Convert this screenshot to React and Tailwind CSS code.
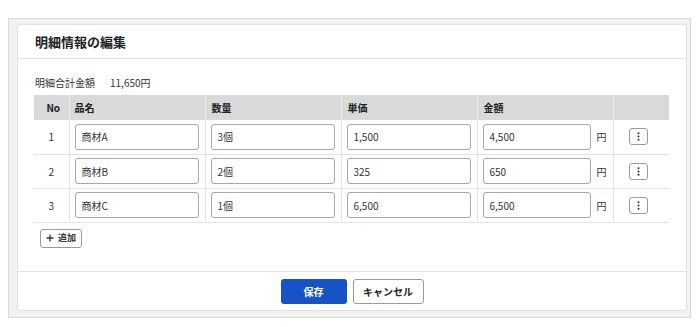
import React from 'react';

const rows = [
  { no: 1, name: '商材A', qty: '3個', price: '1,500', amount: '4,500' },
  { no: 2, name: '商材B', qty: '2個', price: '325', amount: '650' },
  { no: 3, name: '商材C', qty: '1個', price: '6,500', amount: '6,500' },
];

function Field({ value, className = '' }) {
  return (
    <div
      className={`h-[26px] flex items-center px-[6px] border border-[#a9a9a9] rounded-[3px] bg-white text-[10px] text-[#333] ${className}`}
    >
      {value}
    </div>
  );
}

function Kebab() {
  return (
    <button className="w-[19px] h-[17px] flex items-center justify-center border border-[#9a9a9a] rounded-[3px] bg-white">
      <svg width="3" height="9" viewBox="0 0 3 9" fill="#333">
        <circle cx="1.5" cy="1.2" r="1" />
        <circle cx="1.5" cy="4.5" r="1" />
        <circle cx="1.5" cy="7.8" r="1" />
      </svg>
    </button>
  );
}

export default function App() {
  return (
    <div
      className="w-[700px] h-[327px] bg-white pt-[18px] pl-[8px]"
      style={{ fontFamily: '"Noto Sans CJK JP", "Noto Sans", sans-serif' }}
    >
      <div className="w-[683px] h-[300px] bg-[#f1f1f1] border border-[#d9d9d9] pt-[5px] pl-[8px] pr-[3px] pb-[6px]">
        <div className="h-[287px] bg-white border border-[#e3e3e3] rounded-[2px] flex flex-col">
          {/* Header */}
          <div className="h-[34px] px-[17px] flex items-center border-b border-[#e3e3e3]">
            <h2 className="text-[13px] font-bold text-[#222] leading-none">明細情報の編集</h2>
          </div>

          {/* Body */}
          <div className="h-[213px] px-[16px] pt-[16px] border-b border-[#e3e3e3]">
            <div className="h-[14px] flex items-center text-[10px] text-[#333] mb-[6px] pl-[1px]">
              <span className="w-[75px]">明細合計金額</span>
              <span>11,650円</span>
            </div>

            <table className="w-[635px] table-fixed border-collapse text-[10px] text-[#333]">
              <colgroup>
                <col className="w-[35px]" />
                <col className="w-[136px]" />
                <col className="w-[136px]" />
                <col className="w-[136px]" />
                <col className="w-[136px]" />
                <col className="w-[56px]" />
              </colgroup>
              <thead>
                <tr className="h-[25px] bg-[#d9d9d9] font-bold text-[#222]">
                  <th className="text-center pl-[4px] border-r border-[#eeeeee]">No</th>
                  <th className="text-left pl-[5px] border-r border-[#eeeeee]">品名</th>
                  <th className="text-left pl-[6px] border-r border-[#eeeeee]">数量</th>
                  <th className="text-left pl-[6px] border-r border-[#eeeeee]">単価</th>
                  <th className="text-left pl-[6px] border-r border-[#eeeeee]">金額</th>
                  <th></th>
                </tr>
              </thead>
              <tbody>
                {rows.map((r) => (
                  <tr key={r.no} className="h-[34px] border-b border-[#e3e3e3]">
                    <td className="text-center border-r border-[#e3e3e3]">{r.no}</td>
                    <td className="pl-[5px] pr-[6px] border-r border-[#e3e3e3]">
                      <Field value={r.name} />
                    </td>
                    <td className="pl-[5px] pr-[6px] border-r border-[#e3e3e3]">
                      <Field value={r.qty} />
                    </td>
                    <td className="pl-[5px] pr-[6px] border-r border-[#e3e3e3]">
                      <Field value={r.price} />
                    </td>
                    <td className="pl-[5px] pr-[6px] border-r border-[#e3e3e3]">
                      <div className="flex items-center">
                        <Field value={r.amount} className="w-[111px]" />
                        <span className="ml-[6px]">円</span>
                      </div>
                    </td>
                    <td>
                      <div className="flex justify-center pr-[5px]">
                        <Kebab />
                      </div>
                    </td>
                  </tr>
                ))}
              </tbody>
            </table>

            <button className="mt-[6px] ml-[6px] h-[19px] px-[5px] flex items-center gap-[4px] border border-[#9a9a9a] rounded-[3px] bg-white text-[9px] font-bold text-[#333]">
              <svg width="8" height="8" viewBox="0 0 8 8" stroke="#333" strokeWidth="1.3">
                <path d="M4 0.5v7M0.5 4h7" />
              </svg>
              追加
            </button>
          </div>

          {/* Footer */}
          <div className="flex-1 flex items-center justify-center gap-[6px]">
            <button className="w-[66px] h-[25px] rounded-[3px] bg-[#1553c7] text-white text-[10px] font-bold">
              保存
            </button>
            <button className="w-[71px] h-[25px] rounded-[3px] bg-white border border-[#9a9a9a] text-[#222] text-[10px] font-bold">
              キャンセル
            </button>
          </div>
        </div>
      </div>
    </div>
  );
}
